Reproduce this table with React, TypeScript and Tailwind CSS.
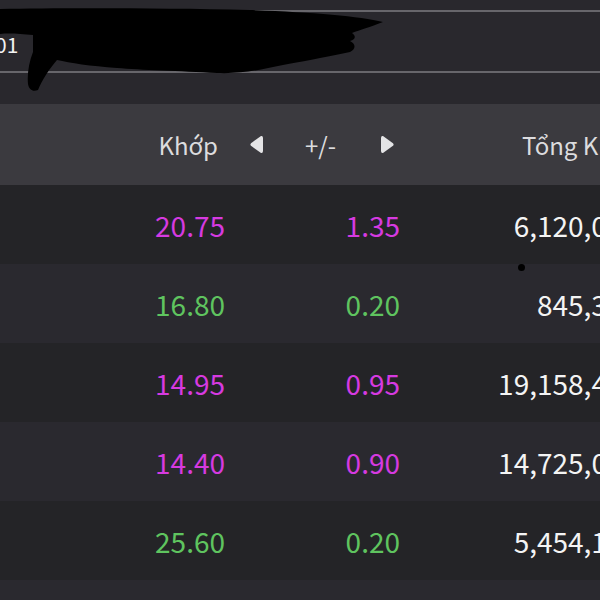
import React from "react";

type Row = {
  price: string;
  change: string;
  volume: string;
  up: boolean;
};

const ROWS: Row[] = [
  { price: "20.75", change: "1.35", volume: "6,120,000", up: true },
  { price: "16.80", change: "0.20", volume: "845,300", up: false },
  { price: "14.95", change: "0.95", volume: "19,158,400", up: true },
  { price: "14.40", change: "0.90", volume: "14,725,000", up: true },
  { price: "25.60", change: "0.20", volume: "5,454,100", up: false },
  { price: "", change: "", volume: "", up: false },
];

const Redaction = () => (
  <svg
    className="absolute left-0 top-0"
    width="400"
    height="100"
    viewBox="0 0 400 100"
  >
    <path
      d="M0 9 C60 8 160 8 250 10 C310 12 360 16 383 22 C370 27 360 30 352 33 C356 36 356 39 350 41 C356 44 356 49 350 52 C320 58 300 62 283 65 C260 70 240 74 217 73 C180 71 140 70 117 68 C90 66 70 63 57 60 C50 68 42 80 38 90 C33 92 29 90 28 84 C27 74 29 62 33 52 L33 35 C20 34 10 33 0 34 Z"
      fill="#000"
    />
    <path d="M58 40 L52 40 L50 50 L57 50 Z" fill="#000" />
  </svg>
);

const Arrow = ({ dir }: { dir: "left" | "right" }) => (
  <svg width="13" height="19" viewBox="0 0 13 19" className="shrink-0">
    {dir === "left" ? (
      <path
        d="M11 1 Q13 0.5 13 3 L13 16 Q13 18.5 11 18 L1 10.8 Q-0.2 9.5 1 8.2 Z"
        fill="#e4e4e6"
      />
    ) : (
      <path
        d="M2 1 Q0 0.5 0 3 L0 16 Q0 18.5 2 18 L12 10.8 Q13.2 9.5 12 8.2 Z"
        fill="#e4e4e6"
      />
    )}
  </svg>
);

export default function App() {
  return (
    <div
      className="relative w-[600px] h-[600px] overflow-hidden bg-[#29282d] text-[28px]"
      style={{ fontFamily: '"Noto Sans CJK SC", "Noto Sans", sans-serif' }}
    >
      <div className="relative h-[104px]">
        <div className="pt-[10px]">
          <div className="h-[2px] bg-[#67666b]"></div>
          <div className="h-[59px] flex items-center pt-[5px]">
            <span className="ml-[-5px] text-[21px] text-[#f2f2f2] leading-none">
              01
            </span>
            <span className="ml-[16px] text-[18px] text-[#b8b8bc] leading-none">
              /
            </span>
          </div>
          <div className="h-[2px] bg-[#67666b]"></div>
        </div>
        <Redaction />
      </div>

      <div className="flex items-center h-[81px] bg-[#3b3a3f] text-[#dcdcde] text-[24px]">
        <div className="w-[218px] shrink-0 text-right">Khớp</div>
        <div className="ml-[32px] shrink-0 flex items-center">
          <Arrow dir="left" />
        </div>
        <div className="ml-[42px] shrink-0">+/-</div>
        <div className="ml-[45px] shrink-0 flex items-center">
          <Arrow dir="right" />
        </div>
        <div className="ml-[128px] shrink-0 whitespace-nowrap">Tổng KL</div>
      </div>

      {ROWS.map((row, i) => (
        <div
          key={i}
          className={`flex items-center h-[79px] ${
            i % 2 === 0 ? "bg-[#242427]" : "bg-[#2a292f]"
          }`}
        >
          <div
            className={`w-[225px] shrink-0 text-right ${
              row.up ? "text-[#d63ae0]" : "text-[#5fc45f]"
            }`}
          >
            {row.price}
          </div>
          <div
            className={`w-[175px] shrink-0 text-right ${
              row.up ? "text-[#d63ae0]" : "text-[#5fc45f]"
            }`}
          >
            {row.change}
          </div>
          <div className="w-[238px] shrink-0 text-right text-[#f4f4f4] whitespace-nowrap">
            {row.volume}
          </div>
        </div>
      ))}

      <div className="absolute left-[518px] top-[264px] w-[7px] h-[7px] rounded-full bg-black"></div>
    </div>
  );
}
